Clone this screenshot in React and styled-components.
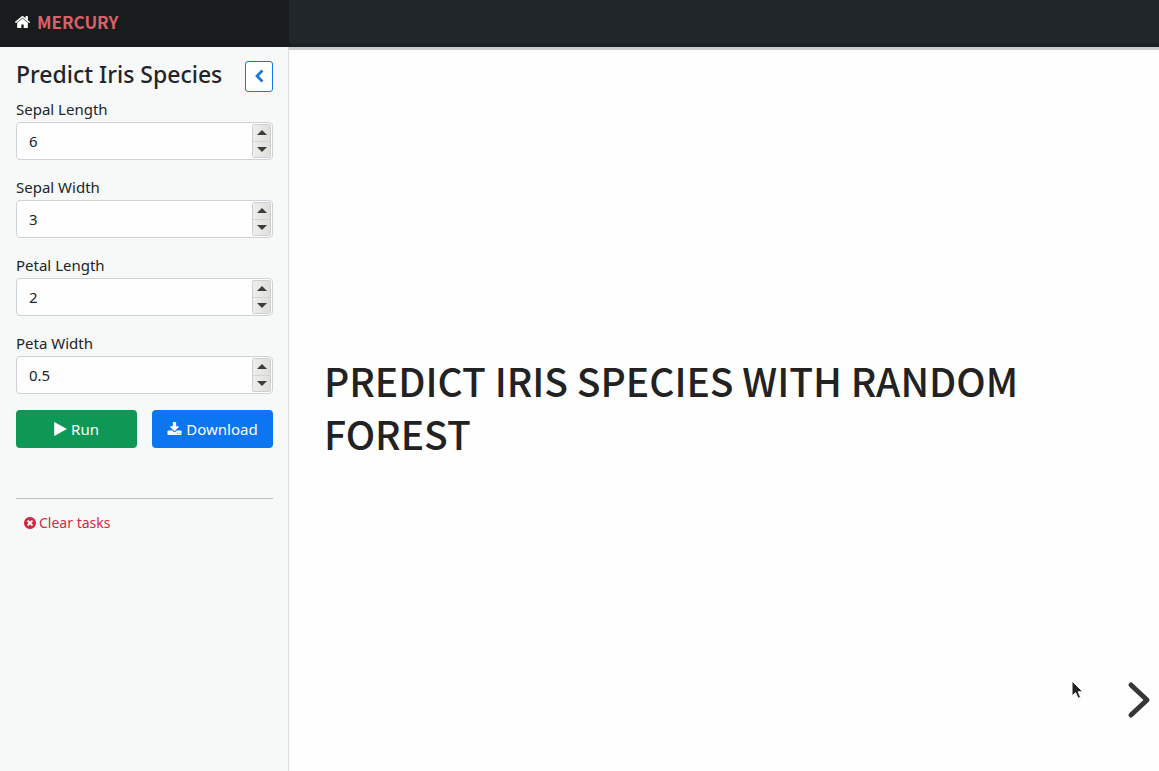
import React, { useState } from "react";
import styled, { createGlobalStyle } from "styled-components";

const GlobalStyle = createGlobalStyle`
  *, *::before, *::after { box-sizing: border-box; }
  body {
    margin: 0;
    background: #fefefe;
    color: #212529;
    font: 15px/24px "Noto Sans", "Open Sans", sans-serif;
  }
  button, input { font: inherit; }
`;

const Page = styled.div`
  min-height: 100vh;
  display: flex;
  flex-direction: column;
`;

const Header = styled.header`
  display: flex;
  height: 47px;
  background: linear-gradient(#202629 42px, #1a1f21);
`;

const Brand = styled.a`
  display: flex;
  align-items: center;
  gap: 7px;
  width: 289px;
  padding: 0 15px 4px;
  background: #191c1d;
  color: #fff;
  text-decoration: none;
`;

const Wordmark = styled.span`
  color: #dd6068;
  font: 700 17px/24px "Noto Sans CJK JP", "Noto Sans", sans-serif;
`;

const Body = styled.div`
  flex: 1;
  display: flex;
`;

const Sidebar = styled.aside`
  flex: none;
  width: 289px;
  padding: 14px 15px 16px 16px;
  background: #f7f9f8;
  border-right: 1px solid #dcdddd;
`;

const TitleRow = styled.div`
  display: flex;
  justify-content: space-between;
  align-items: flex-start;
  height: 37px;
`;

const Title = styled.h1`
  margin: 0;
  font-size: 23px;
  line-height: 26px;
  font-weight: 500;
  white-space: nowrap;
`;

const CollapseButton = styled.button`
  display: flex;
  align-items: center;
  justify-content: center;
  width: 28px;
  height: 31px;
  padding: 0 0 2px;
  background: #fff;
  border: 1px solid #1b76dd;
  border-radius: 3px;
  color: #1b76dd;
`;

const Field = styled.div`
  margin-bottom: 16px;
`;

const Label = styled.label`
  display: block;
  margin-bottom: 2px;
  line-height: 22px;
`;

const NumberBox = styled.div`
  display: flex;
  height: 38px;
  padding: 1px;
  background: #fefefe;
  border: 1px solid #cdd2d6;
  border-radius: 4px;
`;

const NumberInput = styled.input`
  flex: 1;
  min-width: 0;
  padding: 0 11px;
  border: 0;
  outline: 0;
  background: transparent;
  color: #212529;
  appearance: textfield;
  &::-webkit-inner-spin-button,
  &::-webkit-outer-spin-button { appearance: none; margin: 0; }
`;

const Stepper = styled.div`
  display: flex;
  flex-direction: column;
  width: 19px;
  border: 1px solid #cfcfcd;
  border-radius: 2px;
`;

const StepButton = styled.button`
  flex: 1;
  display: flex;
  align-items: center;
  justify-content: center;
  padding: 0;
  border: 0;
  background: linear-gradient(90deg, #eeeeec, #dededc);
  & + & { border-top: 1px solid #d4d4d2; }
`;

const Actions = styled.div`
  display: grid;
  grid-template-columns: 1fr 1fr;
  gap: 15px;
`;

const ActionButton = styled.button`
  display: flex;
  align-items: center;
  justify-content: center;
  gap: 4px;
  height: 38px;
  padding: 0;
  border: 0;
  border-radius: 4px;
  background: ${(p) => p.$color};
  color: #fff;
`;

const Divider = styled.hr`
  margin: 50px 0 12px;
  border: 0;
  border-top: 1px solid #bec0bf;
`;

const ClearButton = styled.button`
  display: flex;
  align-items: center;
  gap: 3px;
  padding: 0 8px;
  border: 0;
  background: transparent;
  color: #d32744;
  font-size: 14px;
`;

const Slide = styled.main`
  position: relative;
  flex: 1;
  display: flex;
  align-items: center;
  padding: 0 35px 8px;
  border-top: 3px solid #cbcccc;
`;

const SlideTitle = styled.h2`
  margin: 0;
  color: #222;
  font: 500 39px/53px "Noto Sans CJK JP", "Noto Sans", sans-serif;
  text-transform: uppercase;
`;

const NextButton = styled.button`
  position: absolute;
  right: 8px;
  bottom: 52px;
  padding: 0;
  border: 0;
  background: transparent;
  line-height: 0;
`;

const Pointer = styled.svg`
  position: absolute;
  right: 75px;
  bottom: 70px;
`;

const Glyph = styled.svg`
  flex: none;
  display: block;
  fill: currentColor;
`;

const glyphs = {
  home: "M1408 992v480q0 26-19 45t-45 19h-384v-384h-256v384h-384q-26 0-45-19t-19-45v-480q0-1 .5-3t.5-3l575-474 575 474q1 2 1 6zm223-69l-62 74q-8 9-21 11h-3q-13 0-21-7l-692-577-692 577q-12 8-24 7-13-2-21-11l-62-74q-8-10-7-23.5t11-21.5l719-599q32-26 76-26t76 26l244 204v-195q0-14 9-23t23-9h192q14 0 23 9t9 23v408l219 182q10 8 11 21.5t-7 23.5z",
  chevron: "M1427 301l-531 531 531 531q19 19 19 45t-19 45l-166 166q-19 19-45 19t-45-19l-742-742q-19-19-19-45t19-45l742-742q19-19 45-19t45 19l166 166q19 19 19 45t-19 45z",
  play: "M1576 927l-1328 738q-23 13-39.5 3t-16.5-36v-1472q0-26 16.5-36t39.5 3l1328 738q23 13 23 31t-23 31z",
  download: "M1344 1344q0-26-19-45t-45-19-45 19-19 45 19 45 45 19 45-19 19-45zm256 0q0-26-19-45t-45-19-45 19-19 45 19 45 45 19 45-19 19-45zm128-224v320q0 40-28 68t-68 28h-1472q-40 0-68-28t-28-68v-320q0-40 28-68t68-28h465l135 136q58 56 136 56t136-56l136-136h464q40 0 68 28t28 68zm-325-569q17 41-14 70l-448 448q-18 19-45 19t-45-19l-448-448q-31-29-14-70 17-39 59-39h256v-448q0-26 19-45t45-19h256q26 0 45 19t19 45v448h256q42 0 59 39z",
  clear: "M1277 1122q0-26-19-45l-181-181 181-181q19-19 19-45 0-27-19-46l-90-90q-19-19-46-19-26 0-45 19l-181 181-181-181q-19-19-45-19-27 0-46 19l-90 90q-19 19-19 46 0 26 19 45l181 181-181 181q-19 19-19 45 0 27 19 46l90 90q19 19 46 19 26 0 45-19l181-181 181 181q19 19 45 19 27 0 46-19l90-90q19-19 19-46zm387-226q0 209-103 385.5t-279.5 279.5-385.5 103-385.5-103-279.5-279.5-103-385.5 103-385.5 279.5-279.5 385.5-103 385.5 103 279.5 279.5 103 385.5z",
};

function Icon({ name, width, height, viewBox }) {
  return (
    <Glyph width={width} height={height} viewBox={viewBox} aria-hidden="true">
      <path d={glyphs[name]} />
    </Glyph>
  );
}

const fields = [
  ["sepal-length", "Sepal Length", 6, 1],
  ["sepal-width", "Sepal Width", 3, 1],
  ["petal-length", "Petal Length", 2, 1],
  ["petal-width", "Peta Width", 0.5, 0.1],
];

function NumberField({ id, label, initial, step }) {
  const [value, setValue] = useState(initial);
  const change = (delta) => setValue((v) => Number((Number(v) + delta).toFixed(2)));
  return (
    <Field>
      <Label htmlFor={id}>{label}</Label>
      <NumberBox>
        <NumberInput id={id} type="number" step={step} value={value} onChange={(e) => setValue(e.target.value)} />
        <Stepper>
          <StepButton type="button" aria-label={`Increase ${label}`} onClick={() => change(step)}>
            <svg width="10" height="5" viewBox="0 0 10 5"><path d="M0 5L5 0l5 5z" fill="#3c3c3a" /></svg>
          </StepButton>
          <StepButton type="button" aria-label={`Decrease ${label}`} onClick={() => change(-step)}>
            <svg width="10" height="5" viewBox="0 0 10 5"><path d="M0 0l5 5 5-5z" fill="#3c3c3a" /></svg>
          </StepButton>
        </Stepper>
      </NumberBox>
    </Field>
  );
}

export default function App() {
  return (
    <Page>
      <GlobalStyle />
      <Header>
        <Brand href="#">
          <Icon name="home" width={15} height={13} viewBox="24 140 1616 1400" />
          <Wordmark>MERCURY</Wordmark>
        </Brand>
      </Header>
      <Body>
        <Sidebar>
          <TitleRow>
            <Title>Predict Iris Species</Title>
            <CollapseButton type="button" aria-label="Collapse sidebar">
              <Icon name="chevron" width={14} height={14} viewBox="0 0 1792 1664" />
            </CollapseButton>
          </TitleRow>
          {fields.map(([id, label, initial, step]) => (
            <NumberField key={id} id={id} label={label} initial={initial} step={step} />
          ))}
          <Actions>
            <ActionButton type="button" $color="#0e9755">
              <Icon name="play" width={13} height={14} viewBox="192 110 1408 1570" />
              Run
            </ActionButton>
            <ActionButton type="button" $color="#0b76f0">
              <Icon name="download" width={15} height={14} viewBox="64 0 1664 1664" />
              Download
            </ActionButton>
          </Actions>
          <Divider />
          <ClearButton type="button">
            <Icon name="clear" width={12} height={12} viewBox="128 128 1536 1536" />
            Clear tasks
          </ClearButton>
        </Sidebar>
        <Slide>
          <SlideTitle>Predict Iris Species with Random Forest</SlideTitle>
          <Pointer width="13" height="21" viewBox="0 0 13 21" aria-hidden="true">
            <path d="M1 1v15l3.6-3.3 2.4 5.6 2.6-1.1-2.4-5.4h4.6z" fill="#222" stroke="#fff" strokeWidth="1" />
          </Pointer>
          <NextButton type="button" aria-label="Next slide">
            <svg width="24" height="38" viewBox="0 0 24 38">
              <path d="M4 4l16 15L4 34" fill="none" stroke="#373737" strokeWidth="5" strokeLinecap="round" strokeLinejoin="round" />
            </svg>
          </NextButton>
        </Slide>
      </Body>
    </Page>
  );
}
